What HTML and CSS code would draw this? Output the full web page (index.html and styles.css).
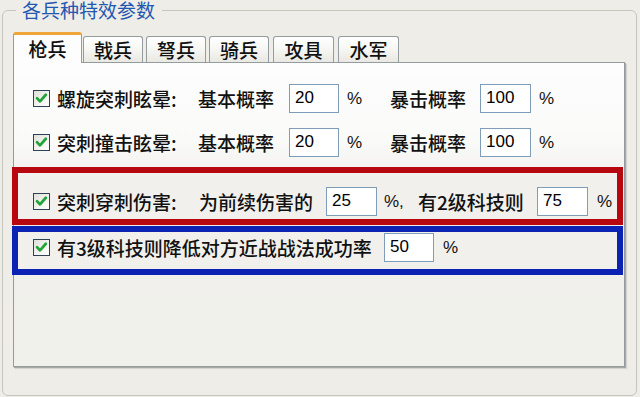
FILE: index.html
```html
<!DOCTYPE html>
<html lang="zh-CN">
<head>
<meta charset="utf-8">
<title>各兵种特效参数</title>
<link rel="stylesheet" href="styles.css">
</head>
<body>
<fieldset class="group">
  <legend class="group-title">各兵种特效参数</legend>
  <div class="tabs">
    <div class="tab tab-active">枪兵</div>
    <div class="tab tab-first">戟兵</div>
    <div class="tab">弩兵</div>
    <div class="tab">骑兵</div>
    <div class="tab tab-wide">攻具</div>
    <div class="tab tab-wide">水军</div>
  </div>
  <div class="panel">
    <div class="row row-1">
      <span class="check"><svg viewBox="0 0 16 16"><polyline points="3.2,7.6 6.4,11 12.6,4"/></svg></span>
      <span class="lbl w-a">螺旋突刺眩晕:</span>
      <span class="lbl w-b">基本概率</span>
      <span class="field f50">20</span>
      <span class="pct w-c">%</span>
      <span class="lbl w-d">暴击概率</span>
      <span class="field f51">100</span>
      <span class="pct">%</span>
    </div>
    <div class="row row-2">
      <span class="check"><svg viewBox="0 0 16 16"><polyline points="3.2,7.6 6.4,11 12.6,4"/></svg></span>
      <span class="lbl w-a">突刺撞击眩晕:</span>
      <span class="lbl w-b">基本概率</span>
      <span class="field f50">20</span>
      <span class="pct w-c">%</span>
      <span class="lbl w-d">暴击概率</span>
      <span class="field f51">100</span>
      <span class="pct">%</span>
    </div>
    <div class="mark mark-red">
      <div class="row">
        <span class="check"><svg viewBox="0 0 16 16"><polyline points="3.2,7.6 6.4,11 12.6,4"/></svg></span>
        <span class="lbl w-e">突刺穿刺伤害:</span>
        <span class="lbl w-f">为前续伤害的</span>
        <span class="field f51">25</span>
        <span class="pct w-g">%,</span>
        <span class="lbl w-h">有2级科技则</span>
        <span class="field f51">75</span>
        <span class="pct pct-far">%</span>
      </div>
    </div>
    <div class="mark mark-blue">
      <div class="row">
        <span class="check"><svg viewBox="0 0 16 16"><polyline points="3.2,7.6 6.4,11 12.6,4"/></svg></span>
        <span class="lbl w-i">有3级科技则降低对方近战战法成功率</span>
        <span class="field f50">50</span>
        <span class="pct pct-far">%</span>
      </div>
    </div>
  </div>
</fieldset>
</body>
</html>
```
FILE: styles.css
```css
html, body {
  margin: 0;
  padding: 0;
}
body {
  width: 640px;
  height: 397px;
  overflow: hidden;
  background: #eeede8;
  font-family: "Noto Sans CJK SC", "Noto Sans", sans-serif;
  color: #111;
}
.group {
  box-sizing: border-box;
  width: 635px;
  margin: 0 0 0 2px;
  padding: 12px 11px 28px 10px;
  border: 1px solid #c6c6bd;
  border-radius: 6px;
  min-width: 0;
}
.group-title {
  margin-left: 3px;
  padding: 0 7px 0 6px;
  font-size: 19px;
  line-height: 20px;
  color: #2257b0;
}
.tabs {
  display: flex;
  align-items: flex-end;
  height: 30px;
}
.tab {
  box-sizing: border-box;
  width: 60px;
  height: 26px;
  margin-left: 3px;
  padding-top: 1px;
  border: 1px solid #939c9e;
  border-bottom: none;
  border-radius: 3px 3px 0 0;
  background: linear-gradient(to bottom, #ffffff 0%, #f7f7f4 45%, #e9e8e2 100%);
  font-size: 19px;
  line-height: 24px;
  text-align: center;
  font-weight: 500;
}
.tab-first {
  margin-left: 1px;
}
.tab-wide {
  width: 61px;
  margin-left: 4px;
}
.tab-active {
  position: relative;
  z-index: 1;
  width: 69px;
  height: 31px;
  margin-left: 0;
  margin-bottom: -1px;
  padding-top: 0;
  border-top: 3px solid #f0a53a;
  border-color: #f0a53a #939c9e #939c9e;
  background: #fdfdfd;
  line-height: 27px;
}
.panel {
  box-sizing: border-box;
  height: 305px;
  padding-top: 21px;
  border: 1px solid #939c9e;
  background: linear-gradient(to bottom, #fdfdfd 0%, #fafaf9 26%, #f1f0ec 38%, #f1f1ec 100%);
  box-shadow: 1px 1px 0 #aaa99f, 2px 2px 1px rgba(0, 0, 0, 0.10);
}
.row {
  display: flex;
  align-items: center;
  height: 29px;
  padding-left: 19px;
}
.row-2 {
  margin-top: 15px;
}
.mark {
  margin-left: -2px;
  margin-right: 1px;
  border: 6px solid;
}
.mark .row {
  padding-left: 15px;
}
.mark-red {
  margin-top: 10px;
  padding: 14px 0 3px;
  border-color: #b8080f;
}
.mark-blue {
  margin-top: 1px;
  padding: 1px 0 7px;
  border-color: #0c22b2;
}
.check {
  box-sizing: border-box;
  flex: none;
  width: 17px;
  height: 17px;
  margin-right: 7px;
  border: 1px solid #2e4257;
  background: linear-gradient(135deg, #dfe0da 0%, #f4f4f1 60%, #ffffff 100%);
}
.check svg {
  display: block;
  width: 15px;
  height: 15px;
}
.check polyline {
  fill: none;
  stroke: #22a33a;
  stroke-width: 2.9;
  stroke-linecap: round;
  stroke-linejoin: round;
}
.lbl {
  flex: none;
  font-size: 19px;
  line-height: 24px;
  font-weight: 500;
  white-space: nowrap;
}
.w-a { width: 141px; }
.w-b { width: 91px; }
.w-d { width: 90px; }
.w-e { width: 142px; }
.w-f { width: 127px; }
.w-h { width: 119px; }
.w-i { width: 327px; }
.field {
  box-sizing: border-box;
  flex: none;
  height: 29px;
  padding-left: 5px;
  border: 1px solid #7f9db9;
  background: #ffffff;
  font-family: "Liberation Sans", Arial, sans-serif;
  font-size: 17px;
  line-height: 26px;
  color: #000;
}
.f50 { width: 50px; }
.f51 { width: 51px; }
.pct {
  flex: none;
  margin-left: 8px;
  font-family: "Liberation Sans", Arial, sans-serif;
  font-size: 17px;
  line-height: 20px;
  color: #111;
}
.w-c { width: 43px; }
.w-g {
  width: 34px;
  margin-left: 7px;
}
.pct-far {
  margin-left: 9px;
}
```
